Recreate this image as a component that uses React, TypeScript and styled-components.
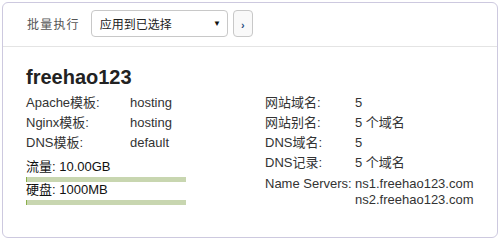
import React from "react";
import styled, { createGlobalStyle } from "styled-components";

const Global = createGlobalStyle`
  html, body { margin: 0; padding: 0; background: #fff; }
  body { font-family: "Liberation Sans", Arial, "Noto Sans CJK SC", sans-serif; font-size: 13px; color: #333; }
`;

const Panel = styled.div`
  margin: 2px 0 0 2px;
  width: 494px;
  height: 234px;
  border: 1px solid #cdc9df;
  border-radius: 6px;
  display: flex;
  flex-direction: column;
`;

const Toolbar = styled.div`
  height: 43px;
  border-bottom: 1px solid #e4e4e4;
  display: flex;
  align-items: center;
  padding: 0 0 0 24px;
`;

const ToolLabel = styled.span`
  font-size: 12px;
  letter-spacing: 1.2px;
  color: #555;
  margin-right: 11px;
  margin-top: -2px;
`;

const SelectBox = styled.div`
  box-sizing: border-box;
  width: 137px;
  height: 27px;
  border: 1px solid #c8c8c8;
  border-radius: 4px;
  display: flex;
  align-items: center;
  justify-content: space-between;
  padding: 0 6px 0 8px;
  font-size: 12px;
  color: #222;
  margin-top: -2px;
`;

const Caret = styled.span`
  font-size: 8px;
  color: #111;
`;

const GoButton = styled.div`
  box-sizing: border-box;
  width: 20px;
  height: 27px;
  margin-left: 5px;
  margin-top: -2px;
  border: 1px solid #c8c8c8;
  border-radius: 4px;
  background: #f9f9f9;
  display: flex;
  align-items: center;
  justify-content: center;
  font-size: 11px;
  font-weight: bold;
  color: #2b4f82;
  padding-top: 3px;
`;

const Body = styled.div`
  padding: 17px 0 0 23px;
`;

const Title = styled.div`
  font-size: 20px;
  font-weight: bold;
  color: #222;
  line-height: 26px;
  margin-bottom: 3px;
`;

const Columns = styled.div`
  display: grid;
  grid-template-columns: 239px 1fr;
`;

const Col = styled.div`
  display: flex;
  flex-direction: column;
`;

const Row = styled.div<{ $labelW: number }>`
  display: grid;
  grid-template-columns: ${(p) => p.$labelW}px 1fr;
  line-height: 20px;
  color: #333;
`;

const NsRow = styled(Row)`
  line-height: 16px;
  padding-top: 3px;
`;

const Usage = styled.div`
  margin-top: 6px;
  display: flex;
  flex-direction: column;
`;

const UsageText = styled.div`
  line-height: 16px;
  color: #111;
`;

const Bar = styled.div`
  width: 160px;
  height: 5px;
  margin-top: 2px;
  background: #c8d6b0;
`;

const Fill = styled.div`
  height: 100%;
  background: #8bb04a;
`;

const leftRows: [string, string][] = [
  ["Apache模板:", "hosting"],
  ["Nginx模板:", "hosting"],
  ["DNS模板:", "default"],
];

const rightRows: [string, string][] = [
  ["网站域名:", "5"],
  ["网站别名:", "5 个域名"],
  ["DNS域名:", "5"],
  ["DNS记录:", "5 个域名"],
];

const usage = [
  { label: "流量: 10.00GB", pct: 0.6 },
  { label: "硬盘: 1000MB", pct: 0.6 },
];

export default function App() {
  return (
    <>
      <Global />
      <Panel>
        <Toolbar>
          <ToolLabel>批量执行</ToolLabel>
          <SelectBox>
            <span>应用到已选择</span>
            <Caret>▼</Caret>
          </SelectBox>
          <GoButton>›</GoButton>
        </Toolbar>
        <Body>
          <Title>freehao123</Title>
          <Columns>
            <Col>
              {leftRows.map(([l, v]) => (
                <Row key={l} $labelW={104}>
                  <span>{l}</span>
                  <span>{v}</span>
                </Row>
              ))}
              <Usage>
                {usage.map((u) => (
                  <React.Fragment key={u.label}>
                    <UsageText>{u.label}</UsageText>
                    <Bar>
                      <Fill style={{ width: `${u.pct}%` }} />
                    </Bar>
                  </React.Fragment>
                ))}
              </Usage>
            </Col>
            <Col>
              {rightRows.map(([l, v]) => (
                <Row key={l} $labelW={90}>
                  <span>{l}</span>
                  <span>{v}</span>
                </Row>
              ))}
              <NsRow $labelW={90}>
                <span>Name Servers:</span>
                <span>
                  ns1.freehao123.com
                  <br />
                  ns2.freehao123.com
                </span>
              </NsRow>
            </Col>
          </Columns>
        </Body>
      </Panel>
    </>
  );
}
